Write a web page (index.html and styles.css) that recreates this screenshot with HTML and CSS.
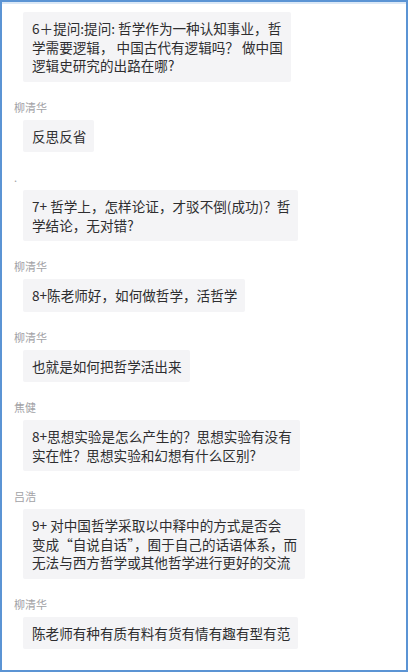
FILE: index.html
```html
<!DOCTYPE html>
<html lang="zh">
<head>
<meta charset="utf-8">
<link rel="stylesheet" href="styles.css">
</head>
<body>
<div class="frame">
  <div class="msg first">
    <div class="bubble">6＋提问:提问: 哲学作为一种认知事业，哲<br>学需要逻辑，&nbsp;中国古代有逻辑吗？&nbsp;做中国<br>逻辑史研究的出路在哪?</div>
  </div>
  <div class="msg">
    <div class="name">柳清华</div>
    <div class="bubble">反思反省</div>
  </div>
  <div class="msg">
    <div class="name dot">.</div>
    <div class="bubble">7+ 哲学上，怎样论证，才驳不倒(成功)？哲<br>学结论，无对错?</div>
  </div>
  <div class="msg">
    <div class="name">柳清华</div>
    <div class="bubble">8+陈老师好，如何做哲学，活哲学</div>
  </div>
  <div class="msg">
    <div class="name">柳清华</div>
    <div class="bubble">也就是如何把哲学活出来</div>
  </div>
  <div class="msg">
    <div class="name">焦健</div>
    <div class="bubble">8+思想实验是怎么产生的？思想实验有没有<br>实在性？思想实验和幻想有什么区别?</div>
  </div>
  <div class="msg">
    <div class="name">吕浩</div>
    <div class="bubble">9+ 对中国哲学采取以中释中的方式是否会<br>变成“自说自话”，囿于自己的话语体系，而<br>无法与西方哲学或其他哲学进行更好的交流</div>
  </div>
  <div class="msg">
    <div class="name">柳清华</div>
    <div class="bubble">陈老师有种有质有料有货有情有趣有型有范</div>
  </div>
</div>
</body>
</html>
```

FILE: styles.css
```css
html, body {
  margin: 0;
  padding: 0;
  background: #ffffff;
}
.frame {
  box-sizing: border-box;
  width: 408px;
  height: 672px;
  border: 2px solid #5b94d4;
  box-shadow: inset 0 2px 0 #dbe8f6;
  padding: 10px 12px 0 12px;
  font-family: "Noto Sans CJK SC", "Noto Sans", sans-serif;
  overflow: hidden;
  display: flex;
  flex-direction: column;
}
.msg {
  display: flex;
  flex-direction: column;
  align-items: flex-start;
}
.name {
  margin-top: 18px;
  margin-bottom: 6px;
  font-size: 11px;
  line-height: 14px;
  color: #a2a2a6;
}
.bubble {
  margin-left: 9px;
  background: #f4f4f6;
  color: #2e2e30;
  font-size: 13.6px;
  line-height: 18.5px;
  padding: 7px 8px 7px 9px;
  white-space: nowrap;
  border-radius: 2px;
}
```
